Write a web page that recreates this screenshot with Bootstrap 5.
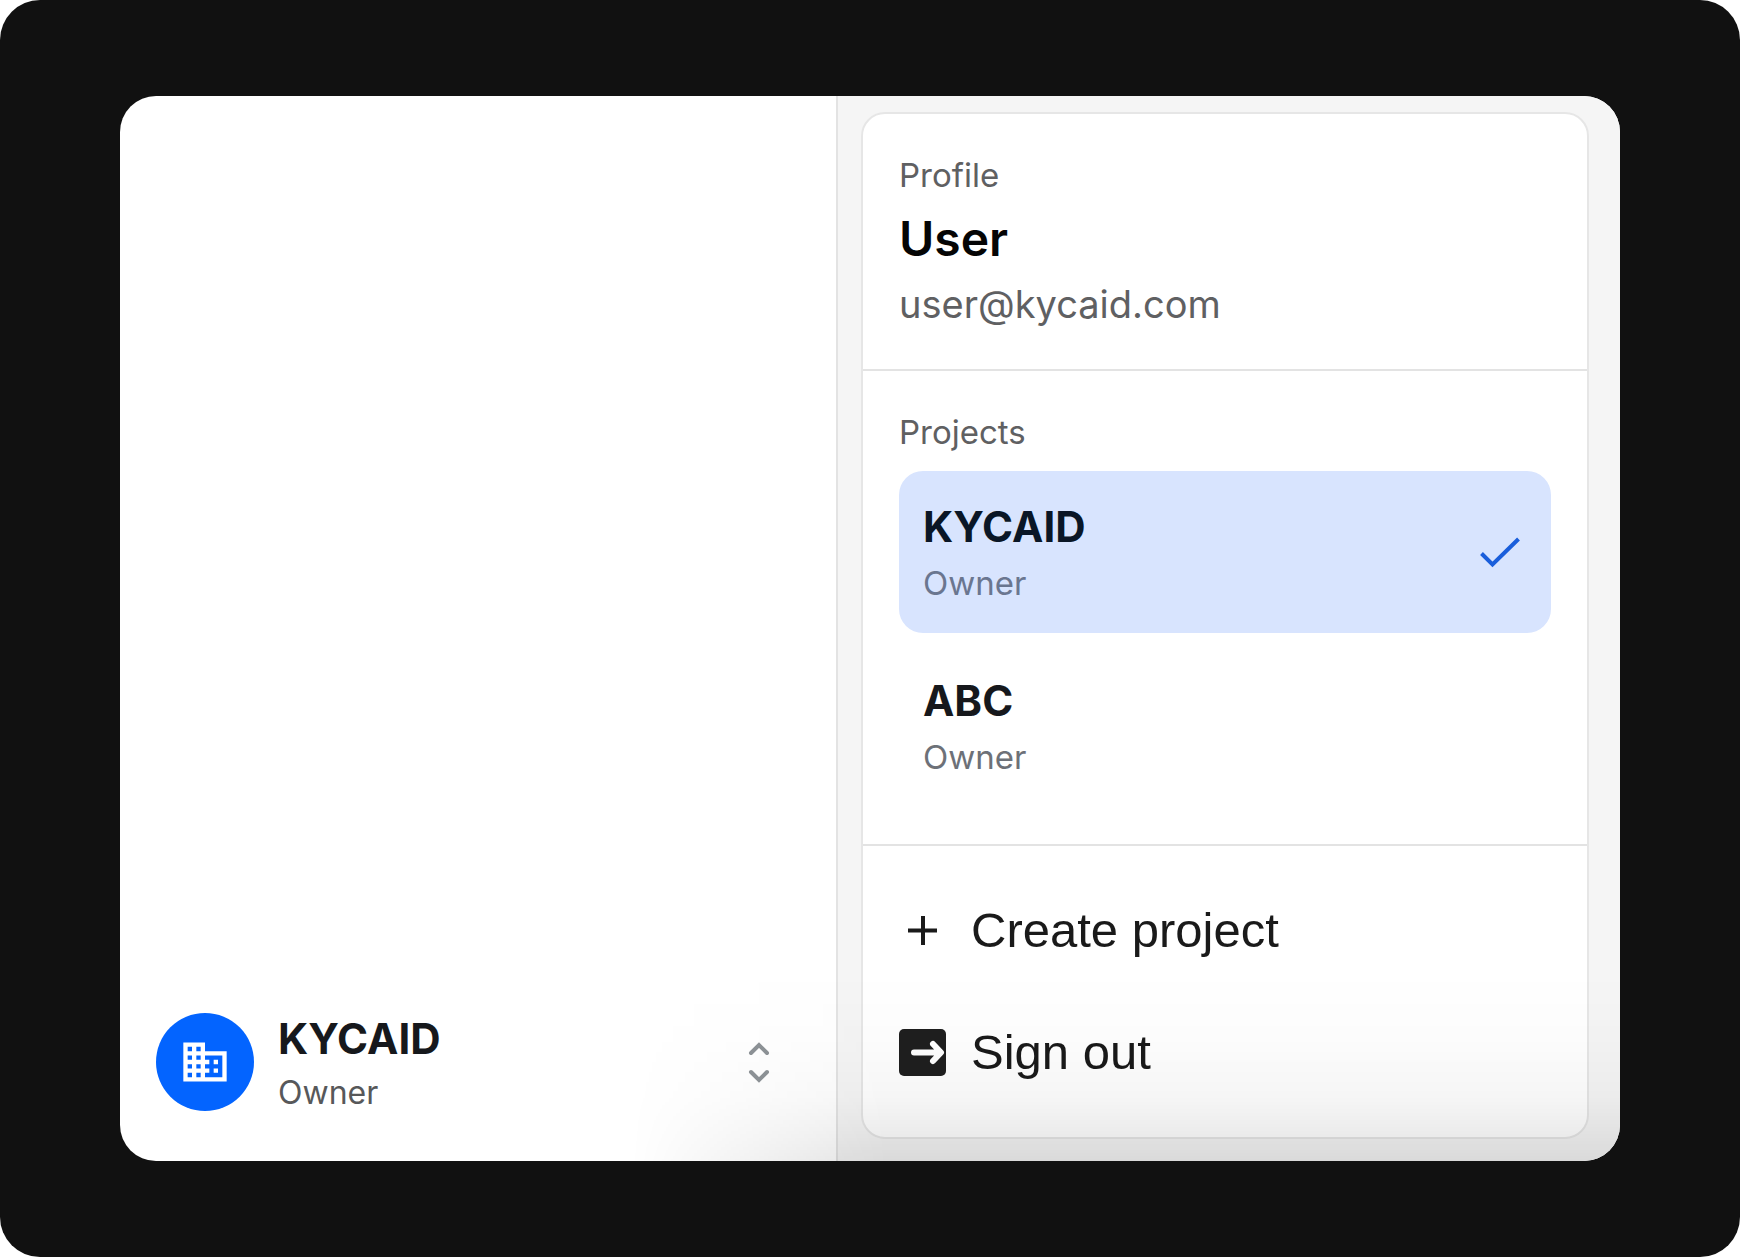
<!DOCTYPE html>
<html lang="en">
<head>
<meta charset="utf-8">
<meta name="viewport" content="width=device-width, initial-scale=1">
<title>Project switcher</title>
<link href="https://cdn.jsdelivr.net/npm/bootstrap@5.3.0/dist/css/bootstrap.min.css" rel="stylesheet">
<style>
  body { font-family: Inter, "Liberation Sans", sans-serif; background: #fff; }
  .stage { background: #111; border-radius: 40px; padding: 96px 120px; }
  .window-frame { display: grid; grid-template-columns: 359fr 391fr; background: #fff; border-radius: 36px; }
  /* soft shade rising from the bottom edge, fading out to the left */
  .window-frame::after {
    content: ""; position: absolute; left: 34%; right: 0; bottom: 0; height: 190px; pointer-events: none;
    background: linear-gradient(to bottom, rgba(0,0,0,0) 0%, rgba(0,0,0,.01) 35%, rgba(0,0,0,.035) 66%, rgba(0,0,0,.08) 87%, rgba(0,0,0,.108) 100%);
    -webkit-mask-image: linear-gradient(to right, transparent 0%, #000 26%);
    mask-image: linear-gradient(to right, transparent 0%, #000 26%);
  }
  .side-pane { border-right: 2px solid #e3e3e3; padding: 48px 64px 48px 36px; }
  .main-pane { background: #f5f5f5; padding: 16px 31px 22px 23px; }
  .menu-card { border: 2px solid #e6e6e6; border-radius: 24px; background: #fff; }
  .menu-section { padding: 41px 36px 37px; }
  .menu-section + .menu-section { border-top: 2px solid #e3e3e3; }
  .section-profile { padding-bottom: 41px; }
  .section-actions { padding: 56px 36px 57px; gap: 66px; }
  .caption-text { font-size: 33px; line-height: 40px; color: #5f6062; }
  .user-name { font-size: 48px; line-height: 56px; font-weight: 600; color: #050505; margin-bottom: 13px; }
  .user-mail { font-size: 38px; line-height: 48px; color: #5f6062; }
  .title-text { font-size: 42px; line-height: 48px; font-weight: 700; color: #16181c; }
  .role-text { font-size: 33px; line-height: 40px; color: #6d7178; }
  .project-list { gap: 12px; margin-top: 19px; }
  .project-text { gap: 12px; }
  .project-item { border: 0; border-radius: 24px; padding: 32px 30px 30px 24px; background: transparent; }
  .project-item.active { background: #d8e4fe; }
  .project-item.active .title-text { color: #0a1626; }
  .project-item.active .role-text { color: #6a7690; }
  .action-item { border: 0; background: transparent; gap: 24px; font-family: "Liberation Sans", Arial, sans-serif; font-size: 49px; line-height: 56px; color: #1a1a1a; }
  .avatar { width: 98px; height: 98px; background: #0364ff; }
  .account-item { border: 0; background: transparent; gap: 24px; }
  .account-text { gap: 10px; padding-top: 2px; }
  .account-item .role-text { font-size: 32px; color: #57585a; }
</style>
<script src="https://cdn.jsdelivr.net/npm/bootstrap@5.3.0/dist/js/bootstrap.bundle.min.js" defer></script>
</head>
<body>
<div class="stage min-vh-100 d-flex flex-column">
  <div class="window-frame position-relative overflow-hidden flex-grow-1">
    <aside class="side-pane d-flex flex-column justify-content-end">
      <button type="button" class="account-item d-flex align-items-center w-100 p-0 text-start" aria-expanded="true">
        <span class="avatar rounded-circle d-flex align-items-center justify-content-center align-self-start flex-shrink-0">
          <svg width="52" height="52" viewBox="0 0 24 24" fill="#fff" aria-hidden="true"><path d="M12 7V3H2v18h20V7H12zM6 19H4v-2h2v2zm0-4H4v-2h2v2zm0-4H4V9h2v2zm0-4H4V5h2v2zm4 12H8v-2h2v2zm0-4H8v-2h2v2zm0-4H8V9h2v2zm0-4H8V5h2v2zm10 12h-8v-2h2v-2h-2v-2h2v-2h-2V9h8v10zm-2-8h-2v2h2v-2zm0 4h-2v2h2v-2z"/></svg>
        </span>
        <span class="account-text d-flex flex-column flex-grow-1">
          <span class="title-text">KYCAID</span>
          <span class="role-text">Owner</span>
        </span>
        <svg width="26" height="46" viewBox="0 0 26 46" fill="none" stroke="#8e9397" stroke-width="4" stroke-linecap="round" aria-hidden="true"><path d="M5 13l8-8 8 8M5 32l8 8 8-8"/></svg>
      </button>
    </aside>
    <main class="main-pane">
      <div class="menu-card">
        <section class="menu-section section-profile">
          <div class="caption-text mb-3">Profile</div>
          <div class="user-name">User</div>
          <div class="user-mail">user@kycaid.com</div>
        </section>
        <section class="menu-section">
          <div class="caption-text">Projects</div>
          <div class="project-list d-flex flex-column">
            <button type="button" class="project-item active d-flex align-items-center w-100 text-start" aria-current="true">
              <span class="project-text d-flex flex-column flex-grow-1"><span class="title-text">KYCAID</span><span class="role-text">Owner</span></span>
              <svg width="42" height="34" viewBox="0 0 42 34" fill="none" stroke="#1a5edb" stroke-width="4" aria-hidden="true"><path d="M2.500 17.500L13.500 28.500L39.500 3"/></svg>
            </button>
            <button type="button" class="project-item d-flex align-items-center w-100 text-start">
              <span class="project-text d-flex flex-column flex-grow-1"><span class="title-text">ABC</span><span class="role-text">Owner</span></span>
            </button>
          </div>
        </section>
        <section class="menu-section section-actions d-flex flex-column">
          <button type="button" class="action-item d-flex align-items-center p-0 text-start">
            <svg width="48" height="48" viewBox="0 0 48 48" fill="none" stroke="#1a1a1a" stroke-width="4" aria-hidden="true"><path d="M24 10v29M9 24.500h29"/></svg>
            Create project
          </button>
          <button type="button" class="action-item d-flex align-items-center p-0 text-start">
            <svg width="48" height="48" viewBox="0 0 48 48" fill="none" aria-hidden="true"><rect x="0" y="1" width="47" height="47" rx="5" fill="#1f1f1f"/><path d="M15 24.500H40M34 16l8 8.500L34 33" stroke="#fff" stroke-width="6" stroke-linecap="round" stroke-linejoin="round"/></svg>
            Sign out
          </button>
        </section>
      </div>
    </main>
  </div>
</div>
</body>
</html>
